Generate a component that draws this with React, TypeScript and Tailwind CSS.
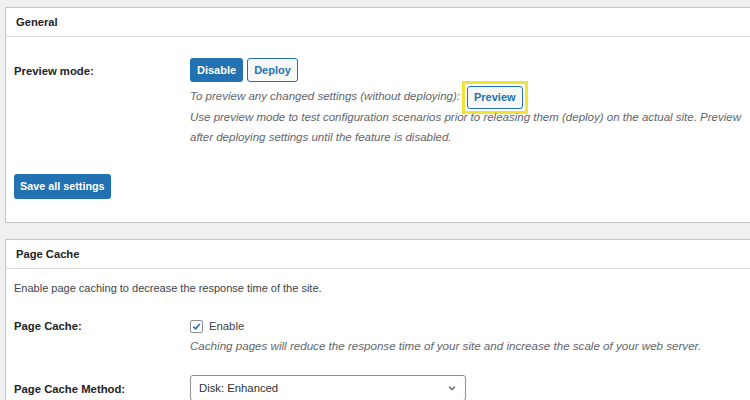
import React from 'react'

const font = { fontFamily: '"Liberation Sans", Arial, sans-serif' }

function Panel({ title, children }: { title: string; children: React.ReactNode }) {
  return (
    <div className="w-[800px] border border-[#c3c4c7] bg-white">
      <div className="flex h-[29px] items-center border-b border-[#dcdcde] px-[10px] text-[11.2px] font-bold text-[#1d2327]">
        {title}
      </div>
      {children}
    </div>
  )
}

export default function App() {
  return (
    <div className="h-[400px] w-[750px] overflow-hidden bg-[#f0f0f1] pl-[5px] pt-[7px]" style={font}>
      <Panel title="General">
        <div className="px-[8px] pb-[23px] pt-[21px]">
          <div className="flex">
            <div className="w-[176px] shrink-0 pt-[5px] text-[11.3px] font-bold text-[#1d2327]">Preview mode:</div>
            <div className="min-w-0 flex-1">
              <div className="flex gap-[4px]">
                <button className="h-[24px] rounded-[3px] bg-[#2271b1] px-[7px] text-[11px] font-bold text-white">
                  Disable
                </button>
                <button className="h-[24px] rounded-[3px] border border-[#2271b1] bg-[#f6f7f7] px-[6px] text-[11px] font-bold text-[#2271b1]">
                  Deploy
                </button>
              </div>
              <div className="mt-[5px] text-[11.5px] italic text-[#5f656b]">
                <div className="flex h-[20px] items-center whitespace-nowrap">
                  To preview any changed settings (without deploying):
                  <span className="ml-[2px] border-[3px] border-[#f0e535] p-[2px]">
                    <button className="block h-[23px] rounded-[3px] border border-[#2271b1] bg-[#f6f7f7] px-[6px] text-[11px] font-bold not-italic text-[#2271b1]">
                      Preview
                    </button>
                  </span>
                </div>
                <div className="h-[20px] whitespace-nowrap leading-[20px]">
                  Use preview mode to test configuration scenarios prior to releasing them (deploy) on the actual site. Preview
                </div>
                <div className="h-[20px] leading-[20px]">after deploying settings until the feature is disabled.</div>
              </div>
            </div>
          </div>
          <button className="mt-[27px] h-[25px] rounded-[3px] bg-[#2271b1] px-[6px] text-[10.8px] font-bold text-white">
            Save all settings
          </button>
        </div>
      </Panel>

      <div className="h-[16px]" />

      <Panel title="Page Cache">
        <div className="px-[8px] pt-[9px]">
          <div className="text-[11px] leading-[20px] text-[#3c434a]">
            Enable page caching to decrease the response time of the site.
          </div>
          <div className="mt-[18px] flex">
            <div className="w-[176px] shrink-0 text-[11.3px] font-bold leading-[20px] text-[#1d2327]">Page Cache:</div>
            <div className="flex-1">
              <label className="flex h-[20px] items-center gap-[6px] text-[11.3px] text-[#3c434a]">
                <span className="flex h-[13px] w-[13px] items-center justify-center rounded-[2px] border border-[#8c8f94] bg-white">
                  <svg viewBox="0 0 12 12" className="h-[11px] w-[11px]">
                    <path d="M2.5 6.2 L5 8.6 L9.6 3.2" fill="none" stroke="#2271b1" strokeWidth="1.8" />
                  </svg>
                </span>
                Enable
              </label>
              <div className="text-[11.6px] italic leading-[20px] text-[#5f656b]">
                Caching pages will reduce the response time of your site and increase the scale of your web server.
              </div>
            </div>
          </div>
          <div className="mt-[19px] flex">
            <div className="w-[176px] shrink-0 pt-[6px] text-[11.3px] font-bold text-[#1d2327]">Page Cache Method:</div>
            <div className="flex h-[26px] w-[276px] items-center justify-between rounded-[3px] border border-[#8c8f94] bg-white pl-[8px] pr-[8px] text-[11.3px] text-[#2c3338]">
              Disk: Enhanced
              <svg viewBox="0 0 12 12" className="h-[10px] w-[10px]">
                <path d="M2.5 4.5 L6 8 L9.5 4.5" fill="none" stroke="#50575e" strokeWidth="1.5" />
              </svg>
            </div>
          </div>
        </div>
      </Panel>
    </div>
  )
}
